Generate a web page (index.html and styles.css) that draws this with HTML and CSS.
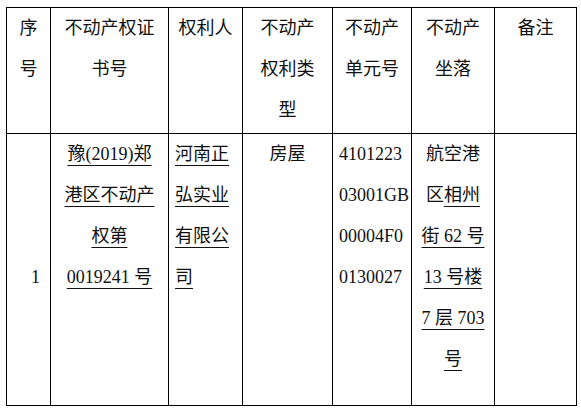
FILE: index.html
```html
<!DOCTYPE html>
<html lang="zh-CN">
<head>
<meta charset="utf-8">
<title>不动产</title>
<link rel="stylesheet" href="styles.css">
</head>
<body>
<table class="grid">
  <colgroup>
    <col class="c1"><col class="c2"><col class="c3"><col class="c4"><col class="c5"><col class="c6"><col class="c7">
  </colgroup>
  <thead>
    <tr class="head">
      <th>序<br>号</th>
      <th>不动产权证<br>书号</th>
      <th>权利人</th>
      <th>不动产<br>权利类<br>型</th>
      <th>不动产<br>单元号</th>
      <th>不动产<br>坐落</th>
      <th>备注</th>
    </tr>
  </thead>
  <tbody>
    <tr class="body">
      <td class="num">1</td>
      <td class="center"><span class="ul">豫(2019)郑</span><br><span class="ul">港区不动产</span><br><span class="ul">权第</span><br><span class="ul">0019241 号</span></td>
      <td class="left"><span class="ul">河南正</span><br><span class="ul">弘实业</span><br><span class="ul">有限公</span><br><span class="ul">司</span></td>
      <td class="center">房屋</td>
      <td class="left code">4101223<br>03001GB<br>00004F0<br>0130027</td>
      <td class="center">航空港<br>区<span class="ul">相州</span><br><span class="ul">街 62 号</span><br><span class="ul">13 号楼</span><br><span class="ul">7 层 703</span><br><span class="ul">号</span></td>
      <td></td>
    </tr>
  </tbody>
</table>
</body>
</html>
```

FILE: styles.css
```css
html, body {
  margin: 0;
  padding: 0;
  background: #ffffff;
}

body {
  font-family: "Liberation Serif", "Noto Sans CJK SC", serif;
  font-size: 18px;
  color: #111;
}

.grid {
  margin: 7px 0 0 6px;
  border-collapse: collapse;
  table-layout: fixed;
  width: 571px;
}

.c1 { width: 44px; }
.c2 { width: 118px; }
.c3 { width: 74px; }
.c4 { width: 90px; }
.c5 { width: 79px; }
.c6 { width: 83px; }
.c7 { width: 82px; }

.grid th,
.grid td {
  border: 1px solid #000;
  padding: 0 6px;
  line-height: 41px;
  vertical-align: top;
  font-weight: normal;
  text-align: center;
  white-space: nowrap;
}

.head {
  height: 126px;
}

.body {
  height: 272px;
}

.grid td.num {
  vertical-align: middle;
  text-align: right;
  padding: 16px 10px 0 0;
}

.grid td.left {
  text-align: left;
}

.grid td.center {
  text-align: center;
}

.ul {
  text-decoration: underline;
  text-decoration-thickness: 1px;
  text-underline-offset: 5px;
}
```
